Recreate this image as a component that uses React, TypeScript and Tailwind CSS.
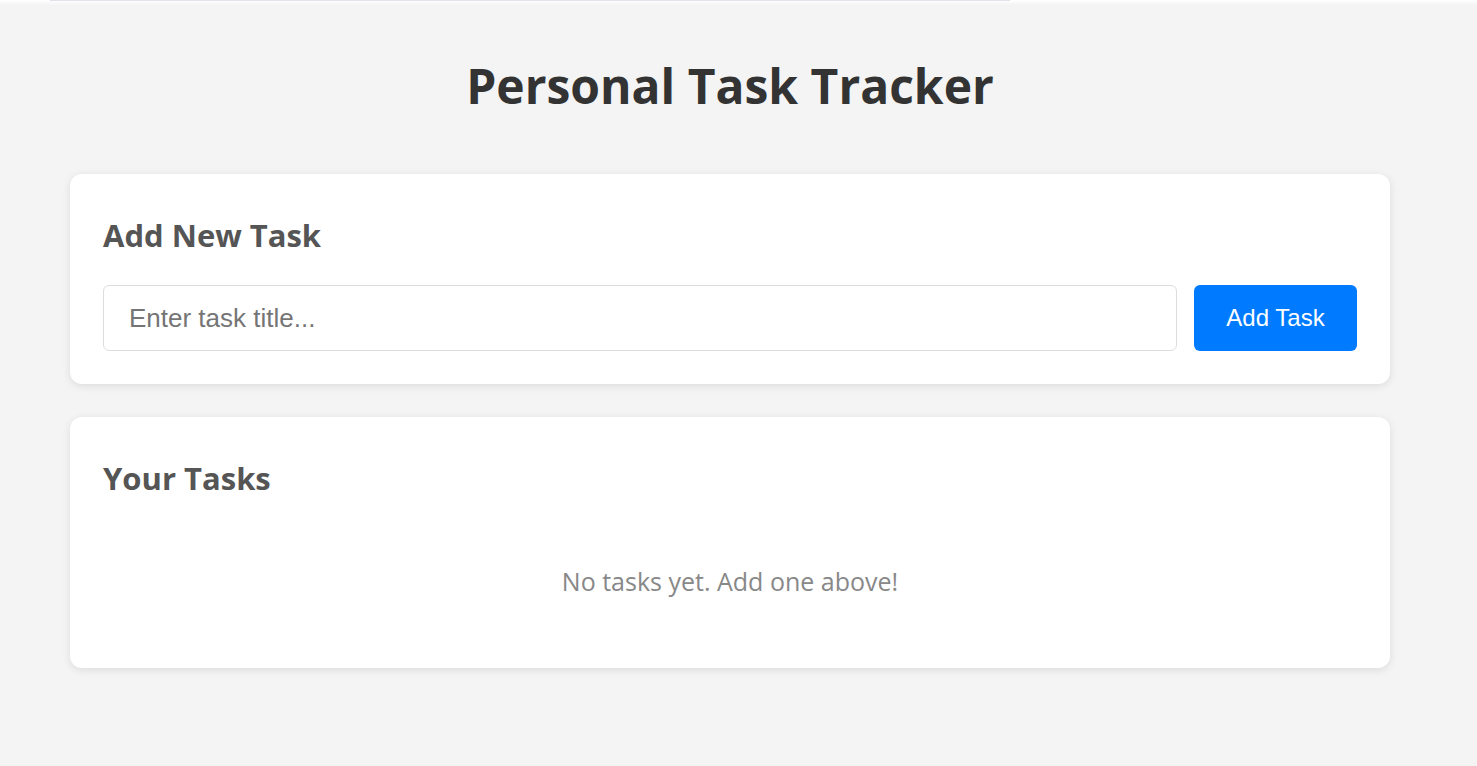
import React, { useState } from "react";

type Task = { id: number; title: string };

const headingFont = { fontFamily: '"Open Sans", "Noto Sans", sans-serif' };
const formFont = { fontFamily: '"Liberation Sans", Arial, sans-serif' };

const App: React.FC = () => {
  const [tasks, setTasks] = useState<Task[]>([]);
  const [title, setTitle] = useState("");

  const addTask = () => {
    if (!title.trim()) return;
    setTasks([...tasks, { id: Date.now(), title: title.trim() }]);
    setTitle("");
  };

  return (
    <div className="min-h-[766px] w-full bg-[#f4f4f4]">
      {/* top edge */}
      <div className="relative h-[5px] bg-gradient-to-b from-white to-[#f4f4f4]">
        <div className="absolute left-[50px] top-0 h-px w-[960px] bg-[#e2e2ea]" />
      </div>

      <div className="w-[1460px]">
        <div className="mx-auto max-w-[1320px]">
          <h1
            className="pt-[47px] pb-[54px] text-center text-[48px] font-bold leading-[68px] text-[#333]"
            style={headingFont}
          >
            Personal Task Tracker
          </h1>

          <div className="rounded-xl bg-white px-[33px] pt-[40px] pb-[33px] shadow-[0_2px_8px_rgba(0,0,0,0.1)]">
            <h2
              className="mb-[29px] text-[31px] font-bold leading-[42px] text-[#555]"
              style={headingFont}
            >
              Add New Task
            </h2>
            <div className="flex gap-[17px]">
              <input
                type="text"
                value={title}
                onChange={(e) => setTitle(e.target.value)}
                placeholder="Enter task title..."
                className="h-[66px] flex-1 rounded-md border border-[#ddd] px-[25px] text-[26px] text-[#333] placeholder:text-[#757575] outline-none"
                style={formFont}
              />
              <button
                onClick={addTask}
                className="h-[66px] w-[163px] rounded-md bg-[#007bff] text-[24px] text-white"
                style={formFont}
              >
                Add Task
              </button>
            </div>
          </div>

          <div className="mt-[33px] rounded-xl bg-white px-[33px] pt-[40px] pb-[63px] shadow-[0_2px_8px_rgba(0,0,0,0.1)]">
            <h2
              className="mb-[58px] text-[31px] font-bold leading-[42px] text-[#555]"
              style={headingFont}
            >
              Your Tasks
            </h2>
            {tasks.length === 0 ? (
              <p
                className="py-[8px] text-center text-[25px] leading-[32px] text-[#888]"
                style={headingFont}
              >
                No tasks yet. Add one above!
              </p>
            ) : (
              <ul>
                {tasks.map((t) => (
                  <li key={t.id} className="border-b border-[#eee] py-3 text-[24px] text-[#333]">
                    {t.title}
                  </li>
                ))}
              </ul>
            )}
          </div>
        </div>
      </div>
    </div>
  );
};

export default App;
